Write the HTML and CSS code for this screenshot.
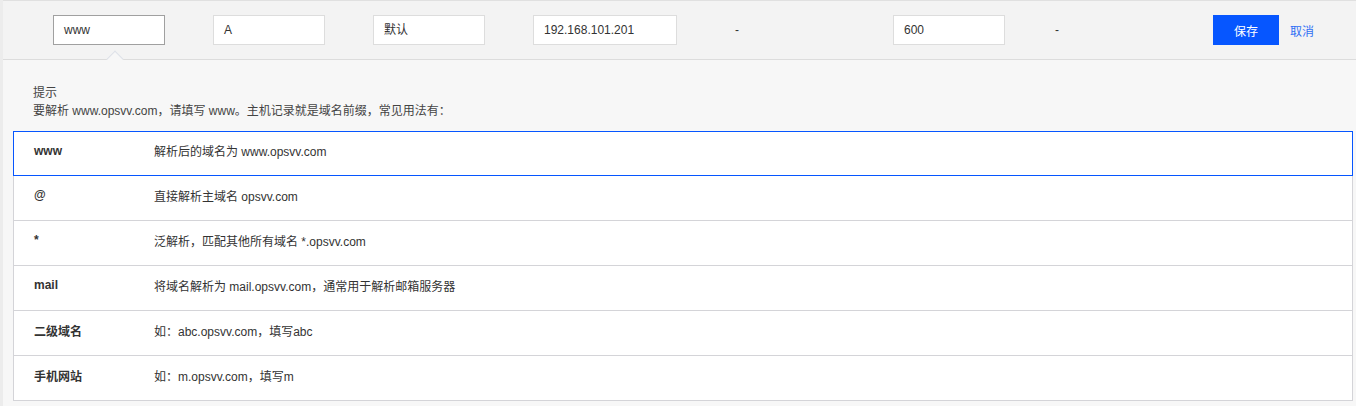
FILE: index.html
```html
<!DOCTYPE html>
<html lang="zh">
<head>
<meta charset="utf-8">
<title>DNS record</title>
<link rel="stylesheet" href="styles.css">
</head>
<body>
<div class="page">
  <div class="edit-row">
    <div class="cell"><div class="input focused">www</div></div>
    <div class="cell"><div class="input">A</div></div>
    <div class="cell"><div class="input">默认</div></div>
    <div class="cell"><div class="input wide">192.168.101.201</div></div>
    <div class="cell"><span class="dash">-</span></div>
    <div class="cell"><div class="input">600</div></div>
    <div class="cell"><span class="dash">-</span></div>
    <div class="cell actions">
      <button class="btn-save">保存</button>
      <a class="btn-cancel">取消</a>
    </div>
  </div>
  <div class="tips">
    <span class="arrow"></span>
    <div class="tips-head">
      <div>提示</div>
      <div>要解析 www.opsvv.com，请填写 www。主机记录就是域名前缀，常见用法有：</div>
    </div>
    <div class="table">
      <div class="trow active"><div class="k">www</div><div class="v">解析后的域名为 www.opsvv.com</div></div>
      <div class="trow"><div class="k">@</div><div class="v">直接解析主域名 opsvv.com</div></div>
      <div class="trow"><div class="k">*</div><div class="v">泛解析，匹配其他所有域名 *.opsvv.com</div></div>
      <div class="trow"><div class="k">mail</div><div class="v">将域名解析为 mail.opsvv.com，通常用于解析邮箱服务器</div></div>
      <div class="trow"><div class="k">二级域名</div><div class="v">如：abc.opsvv.com，填写abc</div></div>
      <div class="trow last"><div class="k">手机网站</div><div class="v">如：m.opsvv.com，填写m</div></div>
    </div>
  </div>
</div>
</body>
</html>
```

FILE: styles.css
```css
* { box-sizing: border-box; }
html, body { margin: 0; padding: 0; }
body {
  background: #f7f7f7;
  font-family: "Liberation Sans", "Noto Sans CJK SC", sans-serif;
  font-size: 12px;
  color: #333;
}
.page {
  border-left: 3px solid #ececec;
  height: 406px;
}
.edit-row {
  display: grid;
  grid-template-columns: 160px 160px 160px 202px 158px 162px 158px auto;
  align-items: center;
  height: 60px;
  padding-left: 50px;
  background: #f3f3f3;
  border-top: 1px solid #e0e0e0;
  border-bottom: 1px solid #dcdcdc;
}
.cell { display: flex; align-items: center; }
.input {
  width: 112px;
  height: 30px;
  line-height: 28px;
  padding: 0 10px;
  background: #fff;
  border: 1px solid #dddddd;
  color: #333;
  font-size: 12px;
}
.input.focused { border-color: #a0a0a0; }
.input.wide { width: 144px; }
.dash { color: #333; }
.actions { gap: 11px; }
.btn-save {
  width: 66px;
  height: 30px;
  border: none;
  background: #0656ff;
  color: #fff;
  font-family: inherit;
  font-size: 12px;
  padding: 0;
}
.btn-cancel { color: #2f6ff3; font-size: 12px; }
.tips {
  position: relative;
  padding: 24px 0 0 10px;
}
.arrow {
  position: absolute;
  left: 106px;
  top: -7px;
  width: 12px;
  height: 12px;
  background: #f7f7f7;
  border-left: 1px solid #dde1e8;
  border-top: 1px solid #dde1e8;
  transform: rotate(45deg);
}
.tips-head {
  padding-left: 20px;
  line-height: 18px;
  color: #444;
}
.table {
  margin-top: 11px;
  width: 1340px;
  background: #fff;
  border: 1px solid #d4d4d8;
  border-top: none;
}
.trow {
  display: flex;
  align-items: center;
  height: 45px;
  padding-bottom: 6px;
  border-bottom: 1px solid #d4d4d8;
  margin: 0 -1px;
  border-left: 1px solid transparent;
  border-right: 1px solid transparent;
}
.trow.last { border-bottom: none; height: 44px; }
.trow.active {
  border: 1px solid #0656ff;
}
.k {
  width: 140px;
  padding-left: 20px;
  font-weight: bold;
  color: #333;
}
.v { color: #333; }
```
